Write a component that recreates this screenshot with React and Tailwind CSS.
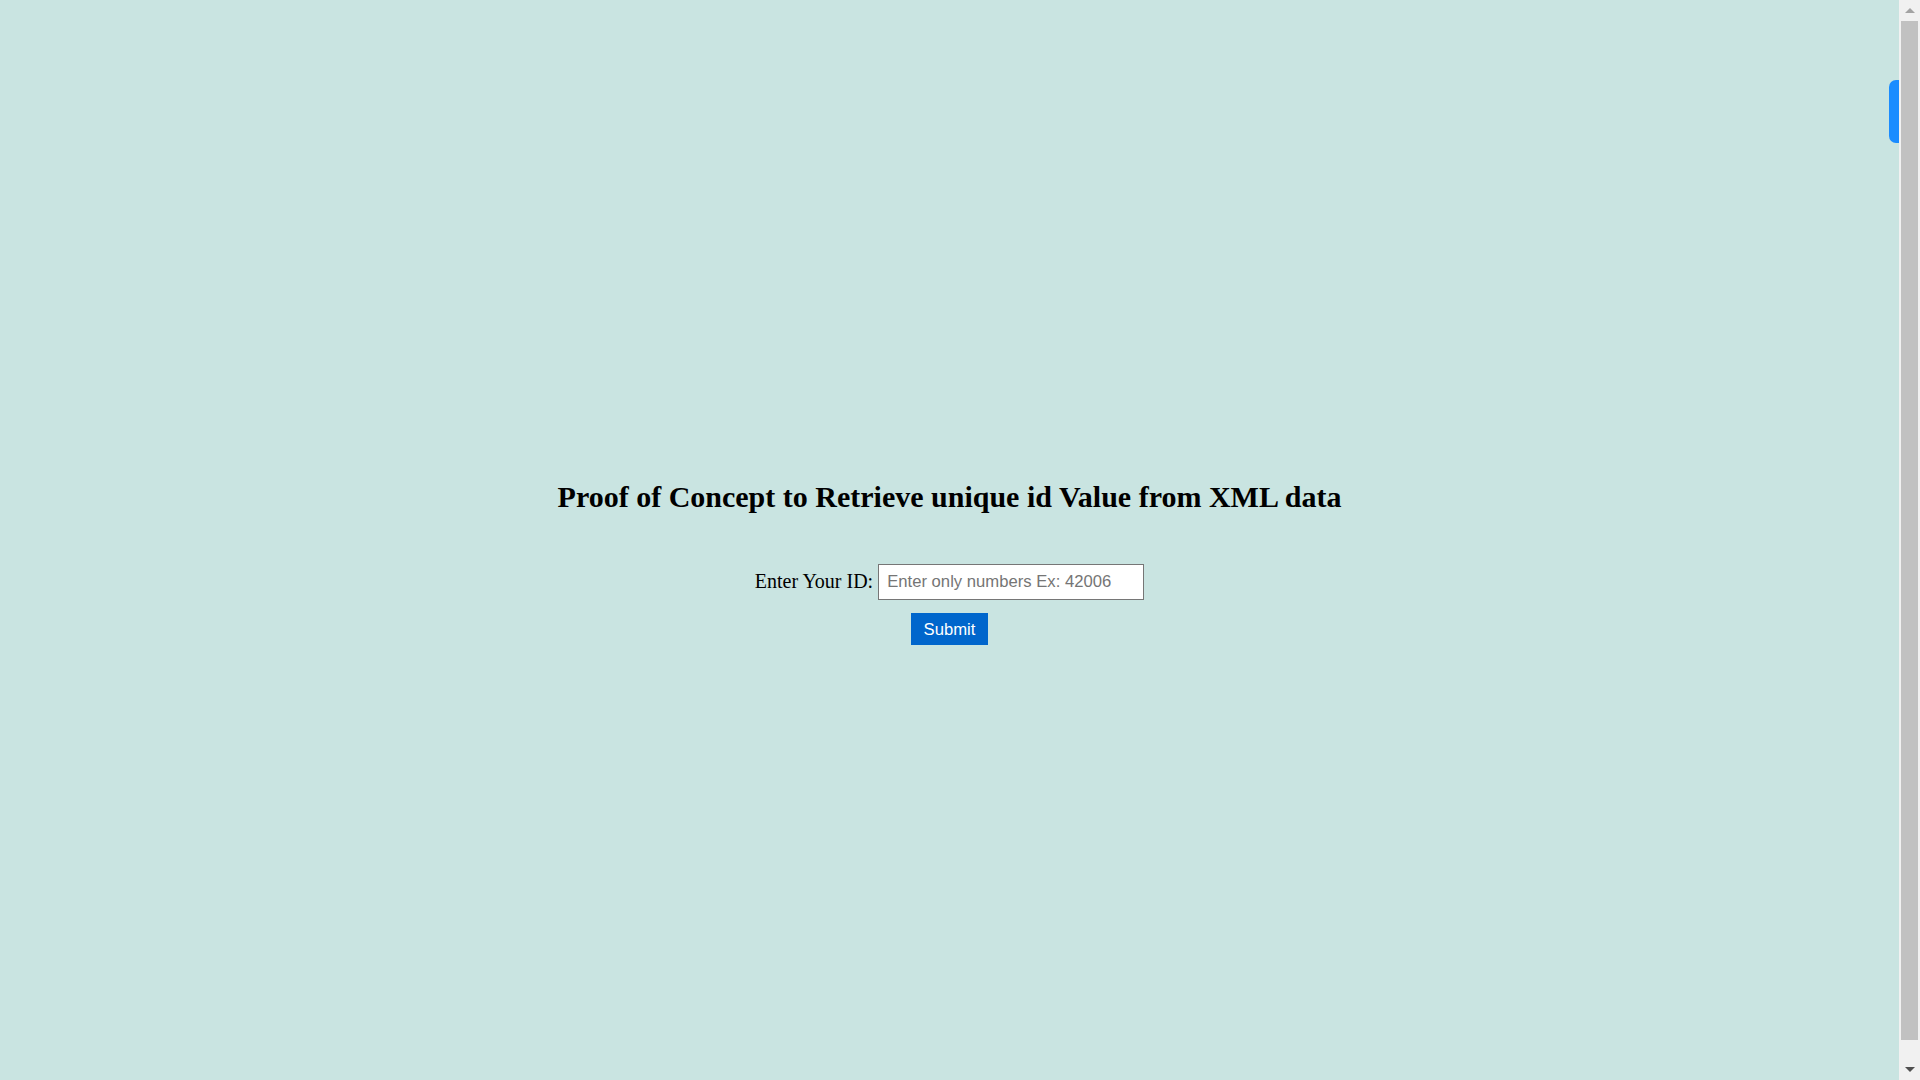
import React, { useState } from 'react'

export default function App() {
    const [id, setId] = useState('')
    return (
        <div className="flex h-[1080px] w-[1920px] overflow-hidden bg-[#c9e4e1]">
            <div className="relative flex flex-1 flex-col items-center pt-[480px]">
                <h2 className="text-[30px] leading-[33px] font-bold text-black" style={{ fontFamily: '"Liberation Serif", serif' }}>
                    Proof of Concept to Retrieve unique id Value from XML data
                </h2>
                <form className="mt-[51px] flex flex-col items-center" onSubmit={(e) => e.preventDefault()}>
                    <div className="flex items-center gap-[5px]">
                        <label htmlFor="uid" className="mb-[2px] text-[20px] leading-[23px] text-black" style={{ fontFamily: '"Liberation Serif", serif' }}>
                            Enter Your ID:
                        </label>
                        <input
                            id="uid"
                            value={id}
                            onChange={(e) => setId(e.target.value)}
                            placeholder="Enter only numbers Ex: 42006"
                            className="h-[36px] w-[266px] border border-[#767676] bg-white px-2 text-[16.67px] text-black outline-none placeholder:text-[#757575]"
                            style={{ fontFamily: '"Liberation Sans", Arial, sans-serif' }}
                        />
                    </div>
                    <button
                        type="submit"
                        className="mt-[13px] h-[32px] w-[77px] bg-[#0066cc] text-[16.67px] text-white"
                        style={{ fontFamily: '"Liberation Sans", Arial, sans-serif' }}
                    >
                        Submit
                    </button>
                </form>
                <div className="absolute right-0 top-[80px] h-[63px] w-[10px] rounded-l-[7px] bg-[#1a8cff]" />
            </div>
            <div className="flex w-[21px] flex-col bg-[#f1f1f1]">
                <div className="flex h-[21px] items-center justify-center">
                    <div className="h-0 w-0 border-x-[5px] border-b-[5px] border-x-transparent border-b-[#a3a3a3]" />
                </div>
                <div className="mx-[2px] mb-[19px] flex-1 bg-[#c1c1c1]" />
                <div className="flex h-[21px] items-center justify-center">
                    <div className="h-0 w-0 border-x-[5px] border-t-[5px] border-x-transparent border-t-[#505050]" />
                </div>
            </div>
        </div>
    )
}
